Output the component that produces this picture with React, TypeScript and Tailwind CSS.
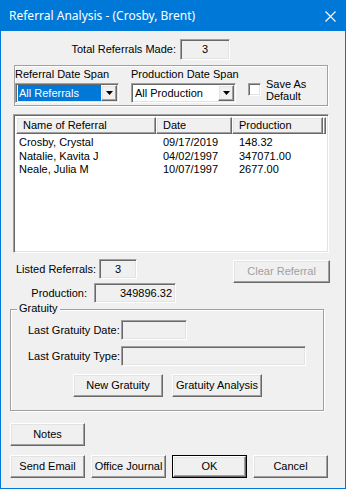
import React from "react";

const sunken =
  "border border-t-[#a0a0a0] border-l-[#a0a0a0] border-b-white border-r-white shadow-[inset_1px_1px_0_#696969,inset_-1px_-1px_0_#e3e3e3]";
const raised =
  "border border-t-white border-l-white border-b-[#696969] border-r-[#696969] shadow-[inset_-1px_-1px_0_#a0a0a0,inset_1px_1px_0_#e3e3e3]";
const etched = "border border-[#a0a0a0] shadow-[1px_1px_0_white,inset_1px_1px_0_white]";

const Btn = ({ label, w, def, disabled }: { label: string; w: string; def?: boolean; disabled?: boolean }) => (
  <div className={`${w} h-[23px] ${def ? "border border-black" : ""} flex`}>
    <div
      className={`flex-1 flex items-center justify-center bg-[#f0f0f0] ${raised} ${disabled ? "text-[#a0a0a0]" : "text-black"}`}
    >
      {label}
    </div>
  </div>
);

const Combo = ({ value, w, selected }: { value: string; w: string; selected?: boolean }) => (
  <div className={`${w} h-[20px] bg-white ${sunken} flex p-[1px]`}>
    <div className="flex-1 flex items-center pl-[1px]">
      <span className={`h-full flex items-center pl-[1px] pr-[1px] ${selected ? "bg-[#0078d7] text-white flex-1" : ""}`}>
        {value}
      </span>
    </div>
    <div className={`w-[16px] bg-[#f0f0f0] ${raised} flex items-center justify-center`}>
      <svg width="7" height="4" viewBox="0 0 7 4">
        <path d="M0 0h7L3.5 4z" fill="black" />
      </svg>
    </div>
  </div>
);

const Field = ({ w, children, align = "center" }: { w: string; children?: React.ReactNode; align?: string }) => (
  <div className={`${w} h-[20px] bg-[#f0f0f0] ${sunken} flex items-center px-[3px] ${align}`}>{children}</div>
);

const rows = [
  ["Crosby, Crystal", "09/17/2019", "148.32"],
  ["Natalie, Kavita J", "04/02/1997", "347071.00"],
  ["Neale, Julia M", "10/07/1997", "2677.00"],
];

export default function App() {
  return (
    <div
      className="w-[346px] h-[489px] border border-[#0078d7] bg-[#f0f0f0] flex flex-col text-[11px] text-black leading-none"
      style={{ fontFamily: '"Liberation Sans", Arial, sans-serif' }}
    >
      <div className="h-[30px] bg-[#0078d7] flex items-center justify-between pl-[8px] pr-[8px] text-white">
        <span className="text-[12px]" style={{ fontFamily: '"Noto Sans", sans-serif' }}>
          Referral Analysis - (Crosby, Brent)
        </span>
        <svg width="11" height="11" viewBox="0 0 11 11" className="mr-[1px]">
          <path d="M0.5 0.5l10 10M10.5 0.5l-10 10" stroke="white" strokeWidth="1.1" />
        </svg>
      </div>

      <div className="flex items-center mt-[8px] h-[21px]">
        <div className="w-[175px] text-right">Total Referrals Made:</div>
        <Field w="w-[50px] ml-[4px] h-[21px]" align="justify-center">3</Field>
      </div>

      <div className={`ml-[13px] mt-[5px] w-[314px] h-[41px] ${etched} flex pt-[2px]`}>
        <div className="flex flex-col w-[116px]">
          <div className="h-[13px] flex items-center">Referral Date Span</div>
          <div className="mt-[2px]">
            <Combo value="All Referrals" w="w-[104px]" selected />
          </div>
        </div>
        <div className="flex flex-col w-[117px]">
          <div className="h-[13px] flex items-center">Production Date Span</div>
          <div className="mt-[2px]">
            <Combo value="All Production" w="w-[105px]" />
          </div>
        </div>
        <div className="flex items-center mt-[6px]">
          <div className={`w-[13px] h-[13px] bg-white ${sunken}`} />
          <div className="ml-[5px] leading-[12px]">
            Save As
            <br />
            Default
          </div>
        </div>
      </div>

      <div className={`ml-[12px] mt-[8px] w-[316px] h-[139px] bg-white ${sunken} p-[2px] flex flex-col`}>
        <div className="flex h-[17px]">
          <div className={`w-[140px] bg-[#f0f0f0] ${raised} pl-[6px] flex items-center`}>Name of Referral</div>
          <div className={`w-[76px] bg-[#f0f0f0] ${raised} pl-[6px] flex items-center`}>Date</div>
          <div className={`w-[91px] bg-[#f0f0f0] ${raised} pl-[6px] flex items-center`}>Production</div>
          <div className={`flex-1 bg-[#f0f0f0] ${raised}`} />
        </div>
        <div className="pt-[2px]">
          {rows.map((r) => (
            <div key={r[0]} className="flex h-[13.5px] items-center">
              <div className="w-[147px] pl-[3px]">{r[0]}</div>
              <div className="w-[76px]">{r[1]}</div>
              <div>{r[2]}</div>
            </div>
          ))}
        </div>
      </div>

      <div className="flex mt-[5px] items-start">
        <div className="flex items-center ml-[15px] mt-[1px]">
          <div>Listed Referrals:</div>
          <Field w="w-[38px] ml-[3px]" align="justify-center">3</Field>
        </div>
        <div className="ml-[96px] mt-[2px]">
          <Btn label="Clear Referral" w="w-[97px]" disabled />
        </div>
      </div>

      <div className="flex items-center h-[20px]">
        <div className="w-[86px] text-right">Production:</div>
        <Field w="w-[82px] ml-[7px]" align="justify-end">349896.32</Field>
      </div>

      <div className={`relative ml-[9px] mt-[6px] w-[314px] h-[102px] ${etched} flex flex-col`}>
        <span className="absolute -top-[7px] left-[6px] bg-[#f0f0f0] px-[2px]">Gratuity</span>
        <div className="flex items-center mt-[10px] ml-[17px]">
          <div className="w-[93px]">Last Gratuity Date:</div>
          <Field w="w-[66px]" />
        </div>
        <div className="flex items-center mt-[6px] ml-[17px]">
          <div className="w-[93px]">Last Gratuity Type:</div>
          <Field w="w-[185px]" />
        </div>
        <div className="flex mt-[8px] ml-[62px] gap-[9px]">
          <Btn label="New Gratuity" w="w-[90px]" />
          <Btn label="Gratuity Analysis" w="w-[90px]" />
        </div>
      </div>

      <div className="ml-[9px] mt-[12px]">
        <Btn label="Notes" w="w-[75px]" />
      </div>

      <div className="flex ml-[9px] mt-[9px] gap-[6px]">
        <Btn label="Send Email" w="w-[75px]" />
        <Btn label="Office Journal" w="w-[75px]" />
        <Btn label="OK" w="w-[75px]" def />
        <Btn label="Cancel" w="w-[75px]" />
      </div>
    </div>
  );
}
